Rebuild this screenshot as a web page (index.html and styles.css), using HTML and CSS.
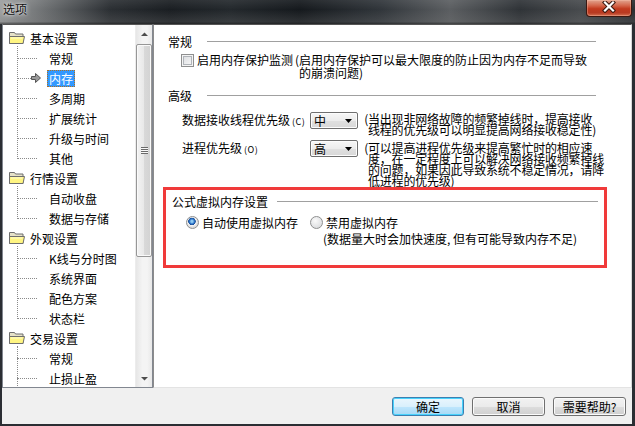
FILE: index.html
```html
<!DOCTYPE html>
<html lang="zh">
<head>
<meta charset="utf-8">
<title>选项</title>
<link rel="stylesheet" href="styles.css">
</head>
<body>
<div class="window">
  <div class="titlebar">
    <span class="title">选项</span>
    <div class="close">
      <svg width="14" height="12" viewBox="0 0 14 12">
        <path d="M3 1.5L11 9.5M11 1.5L3 9.5" stroke="#3a1810" stroke-width="4.2" stroke-linecap="square"/>
        <path d="M3 1.5L11 9.5M11 1.5L3 9.5" stroke="#ffffff" stroke-width="2.2" stroke-linecap="square"/>
      </svg>
    </div>
  </div>
  <div class="client">
    <div class="main">
      <div class="tree">
        <div class="tree-list">
          <div class="node">
            <div class="node-head"><svg class="folder" width="16" height="14" viewBox="0 0 16 14"><path d="M0.5 1.5h5l1 1.5h7.5v9.5h-13.5z" fill="#e6e2c8" stroke="#6e6e6e"/><path d="M0.5 5.5h15l-1.5 7h-13.5z" fill="#fff582" stroke="#6e6e6e"/><path d="M2 7h11.5" stroke="#fffbd0"/></svg><span>基本设置</span></div>
            <div class="children">
              <div class="leaf"><span class="label">常规</span></div>
              <div class="leaf"><svg class="arrow" width="10" height="10" viewBox="0 0 10 10"><path d="M0.5 3.5h4v-3l5 4.5-5 4.5v-3h-4z" fill="#9a9a9a" stroke="#555"/></svg><span class="label sel">内存</span></div>
              <div class="leaf"><span class="label">多周期</span></div>
              <div class="leaf"><span class="label">扩展统计</span></div>
              <div class="leaf"><span class="label">升级与时间</span></div>
              <div class="leaf"><span class="label">其他</span></div>
            </div>
          </div>
          <div class="node">
            <div class="node-head"><svg class="folder" width="16" height="14" viewBox="0 0 16 14"><path d="M0.5 1.5h5l1 1.5h7.5v9.5h-13.5z" fill="#e6e2c8" stroke="#6e6e6e"/><path d="M0.5 5.5h15l-1.5 7h-13.5z" fill="#fff582" stroke="#6e6e6e"/><path d="M2 7h11.5" stroke="#fffbd0"/></svg><span>行情设置</span></div>
            <div class="children">
              <div class="leaf"><span class="label">自动收盘</span></div>
              <div class="leaf"><span class="label">数据与存储</span></div>
            </div>
          </div>
          <div class="node">
            <div class="node-head"><svg class="folder" width="16" height="14" viewBox="0 0 16 14"><path d="M0.5 1.5h5l1 1.5h7.5v9.5h-13.5z" fill="#e6e2c8" stroke="#6e6e6e"/><path d="M0.5 5.5h15l-1.5 7h-13.5z" fill="#fff582" stroke="#6e6e6e"/><path d="M2 7h11.5" stroke="#fffbd0"/></svg><span>外观设置</span></div>
            <div class="children">
              <div class="leaf"><span class="label">K线与分时图</span></div>
              <div class="leaf"><span class="label">系统界面</span></div>
              <div class="leaf"><span class="label">配色方案</span></div>
              <div class="leaf"><span class="label">状态栏</span></div>
            </div>
          </div>
          <div class="node">
            <div class="node-head"><svg class="folder" width="16" height="14" viewBox="0 0 16 14"><path d="M0.5 1.5h5l1 1.5h7.5v9.5h-13.5z" fill="#e6e2c8" stroke="#6e6e6e"/><path d="M0.5 5.5h15l-1.5 7h-13.5z" fill="#fff582" stroke="#6e6e6e"/><path d="M2 7h11.5" stroke="#fffbd0"/></svg><span>交易设置</span></div>
            <div class="children more">
              <div class="leaf"><span class="label">常规</span></div>
              <div class="leaf"><span class="label">止损止盈</span></div>
            </div>
          </div>
        </div>
        <div class="vscroll">
          <div class="sbtn"><svg width="7" height="4" viewBox="0 0 7 4"><path d="M0 4L3.5 0.5L7 4z" fill="#4d4d4d"/></svg></div>
          <div class="thumb"><div class="grip"></div></div>
          <div class="track"></div>
          <div class="sbtn"><svg width="7" height="4" viewBox="0 0 7 4"><path d="M0 0L3.5 3.5L7 0z" fill="#4d4d4d"/></svg></div>
        </div>
      </div>

      <div class="panel">
        <div class="group-head"><span>常规</span><i class="rule"></i></div>
        <div class="check-row">
          <span class="checkbox"></span>
          <span class="check-label">启用内存保护监测</span>
          <span class="note note-13"><span class="paren">(</span>启用内存保护可以最大限度的防止因为内存不足而导致<br>的崩溃问题)</span>
        </div>

        <div class="group-head head-2"><span>高级</span><i class="rule"></i></div>
        <div class="opt-row">
          <span class="opt-label">数据接收线程优先级<small>(C)</small></span>
          <span class="combo"><span>中</span><svg width="7" height="4" viewBox="0 0 7 4"><path d="M0 0L3.5 4L7 0z" fill="#000"/></svg></span>
          <span class="note note-11"><span class="paren">(</span>当出现非网络故障的频繁掉线时，提高接收<br>线程的优先级可以明显提高网络接收稳定性)</span>
        </div>
        <div class="opt-row row-2">
          <span class="opt-label">进程优先级<small>(O)</small></span>
          <span class="combo"><span>高</span><svg width="7" height="4" viewBox="0 0 7 4"><path d="M0 0L3.5 4L7 0z" fill="#000"/></svg></span>
          <span class="note note-11 note-low"><span class="paren">(</span>可以提高进程优先级来提高繁忙时的相应速<br>度，在一定程度上可以解决网络接收频繁掉线<br>的问题，如果因此导致系统不稳定情况，请降<br>低进程的优先级)</span>
        </div>

        <div class="highlight">
          <div class="group-head head-vm"><span>公式虚拟内存设置</span><i class="rule"></i></div>
          <div class="radio-row">
            <span class="radio checked"></span>
            <span class="radio-label">自动使用虚拟内存</span>
            <span class="radio radio-2"></span>
            <span class="radio-label">禁用虚拟内存<span class="radio-sub">(数据量大时会加快速度, 但有可能导致内存不足)</span></span>
          </div>
        </div>
      </div>
    </div>
    <div class="footer">
      <button class="btn default">确定</button>
      <button class="btn">取消</button>
      <button class="btn">需要帮助?</button>
    </div>
  </div>
</div>
</body>
</html>
```
FILE: styles.css
```css
* { box-sizing: border-box; }
html, body { margin: 0; padding: 0; }
body {
  width: 635px; height: 426px; overflow: hidden;
  font-family: "Noto Sans CJK SC", "Liberation Sans", sans-serif;
  font-size: 12px; color: #000;
  background: #222;
}
.window {
  width: 635px; height: 426px;
  display: flex; flex-direction: column;
  background: #2b2e33;
}
.titlebar {
  height: 24px; flex: none; position: relative;
  background:
    linear-gradient(to bottom, rgba(255,255,255,0.08), rgba(0,0,0,0) 40%, rgba(120,120,120,0.25) 90%, rgba(40,40,40,0.6)),
    linear-gradient(to right, #9c9e9f 0px, #6d7072 45px, #2b2f33 110px, #1a1e22 170px, #23282c 230px, #15191d 300px, #30353a 380px, #5b5e61 450px, #2f3337 520px, #474a4d 580px, #2a2d31 635px);
}
.title {
  position: absolute; left: 3px; top: 2px;
  font-size: 12px; line-height: 14px; color: #101010;
  text-shadow: 0 0 5px rgba(255,255,255,0.9), 0 0 2px rgba(255,255,255,0.7);
}
.close {
  position: absolute; left: 586px; top: 0; width: 46px; height: 17px;
  border: 1px solid #3b1810; border-top: none;
  border-radius: 0 0 4px 4px;
  background: linear-gradient(to bottom, #e2a58f 0%, #d4664b 35%, #c23a1e 55%, #b83a22 80%, #d47050 100%);
  box-shadow: inset 0 0 0 1px rgba(255,200,180,0.35);
  display: flex; justify-content: center; align-items: flex-start; padding-top: 1px;
}
.client {
  flex: 1; margin: 0 3px 2px 2px;
  background: #f0f0f0;
  display: flex; flex-direction: column;
}
.main { height: 364px; display: flex; flex: none; }

/* tree */
.tree {
  width: 151px; height: 364px; flex: none;
  border: 1px solid #828790;
  border-top-color: #555;
  background: #fff;
  display: flex; overflow: hidden;
}
.tree-list { flex: 1; padding-top: 3px; overflow: hidden; }
.node-head {
  height: 20px; display: flex; align-items: center;
  padding-left: 6px; white-space: nowrap;
}
.folder { flex: none; margin-right: 5px; }
.children { position: relative; margin-left: 14px; }
.children::before {
  content: ""; position: absolute; left: 0; top: -2px; bottom: 9px;
  border-left: 1px dotted #8a8a8a;
}
.children.more::before { bottom: -12px; }
.leaf {
  position: relative; height: 20px; display: flex; align-items: center;
  padding-left: 30px; white-space: nowrap;
}
.leaf::before {
  content: ""; position: absolute; left: 0; top: 10px; width: 20px;
  border-top: 1px dotted #8a8a8a;
}
.label { padding: 0 2px; line-height: 17px; }
.label.sel { background: #3399ff; color: #fff; outline: 1px dotted #b07020; outline-offset: -1px; }
.arrow { position: absolute; left: 14px; top: 5px; }

.vscroll {
  width: 17px; flex: none; display: flex; flex-direction: column;
  background: linear-gradient(to right, #e6e6e6, #f4f4f4 40%, #f4f4f4 70%, #e8e8e8);
  border-left: 1px solid #ececec;
}
.sbtn { height: 17px; flex: none; display: flex; align-items: center; justify-content: center; }
.thumb {
  margin: 2px 0 0 0; height: 213px; flex: none;
  border: 1px solid #979797; border-radius: 2px;
  background: linear-gradient(to right, #f3f3f3, #e8e8e8 50%, #d9d9d9 51%, #d2d2d2);
  box-shadow: inset 0 0 0 1px #fafafa;
  display: flex; align-items: center; justify-content: center;
}
.grip {
  width: 7px; height: 7px;
  background: repeating-linear-gradient(to bottom, #6a6a6a 0 1px, #f8f8f8 1px 2px);
}
.track { flex: 1; }

/* right panel */
.panel {
  width: 479px; height: 364px; flex: none;
  background: #fff;
  border: 1px solid #8c8c8c; border-top-color: #555; border-right-color: #d8d8d8; border-bottom-color: #e3e3e3;
  padding: 9px 35px 0 14px;
  display: flex; flex-direction: column;
}
.group-head {
  height: 16px; display: flex; align-items: center; white-space: nowrap; line-height: 16px;
}
.rule { flex: 1; height: 1px; background: #a0a0a0; margin-left: 15px; margin-top: -1px; }
.head-2 { margin-top: 9px; }

.check-row { margin: 3px 0 0 13px; display: flex; align-items: flex-start; white-space: nowrap; line-height: 13px; }
.checkbox {
  width: 13px; height: 13px; flex: none; margin-top: 1px;
  border: 1px solid #8e8f8f;
  background: linear-gradient(135deg, #d8dadd, #fafafa);
  box-shadow: inset 0 0 0 1px #f4f4f4, inset 0 0 0 2px #b0b4b9;
}
.check-label { margin-left: 3px; }
.note { display: block; white-space: nowrap; text-indent: -6px; }
.paren { display: inline-block; width: 6px; text-indent: 0; text-align: right; }
.note-13 { margin-left: 6px; line-height: 13px; }
.note-11 { margin-left: 10px; line-height: 11px; padding-top: 1px; letter-spacing: -0.2px; }
.note-low { padding-top: 2px; }

.opt-row { margin: 8px 0 0 14px; display: flex; align-items: flex-start; }
.row-2 { margin-top: 5px; }
.opt-label { width: 128px; flex: none; line-height: 16px; white-space: nowrap; }
.opt-label small { font-size: 9px; margin-left: 2px; letter-spacing: 0.5px; }
.combo {
  width: 48px; height: 17px; flex: none;
  border: 1px solid #6f6f6f; border-radius: 2px;
  background: linear-gradient(to bottom, #f7f7f7, #ececec 50%, #e0e0e0 51%, #d8d8d8);
  box-shadow: inset 0 0 0 1px #fcfcfc;
  display: flex; align-items: center; justify-content: space-between;
  padding: 0 5px 0 3px; line-height: 15px;
}

.highlight {
  margin: 1px -11px 0 -5px;
  height: 81px; flex: none;
  border: 3px solid #f03a3a;
  padding: 4px 6px 0 6px;
}
.head-vm .rule { margin-left: 9px; }
.radio-row { margin: 5px 0 0 14px; display: flex; align-items: flex-start; line-height: 16px; white-space: nowrap; }
.radio {
  width: 13px; height: 13px; flex: none; margin-top: 1px;
  border-radius: 50%; border: 1px solid #8e8f8f;
  background: radial-gradient(circle at 40% 35%, #fafafa, #d2d4d7);
}
.radio.checked {
  background: radial-gradient(circle at 45% 40%, #8ccaf2 0 1px, #2a72c8 2.5px, #1d4f96 3.5px, #f4f4f4 4px, #dcdcdc 6px);
}
.radio-label { margin-left: 3px; }
.radio-2 { margin-left: 12px; }
.radio-sub { display: block; margin-left: -3px; }

/* footer */
.footer {
  flex: 1; display: flex; justify-content: flex-end; align-items: flex-start;
  gap: 8px; padding: 9px 6px 0 0;
}
.btn {
  height: 19px; width: 73px; padding: 0;
  font-family: "Noto Sans CJK SC", "Liberation Sans", sans-serif; font-size: 12px; line-height: 15px; color: #000;
  border: 1px solid #707070; border-radius: 3px;
  background: linear-gradient(to bottom, #f2f2f2 0%, #ebebeb 50%, #dddddd 51%, #cfcfcf 100%);
  box-shadow: inset 0 0 0 1px #fbfbfb;
}
.btn.default {
  width: 72px;
  border-color: #3c7fb1;
  background: linear-gradient(to bottom, #eaf6fd 0%, #d9f0fc 50%, #bee6fd 51%, #a7d9f5 100%);
  box-shadow: inset 0 0 0 1px #48d2fc;
}
```
